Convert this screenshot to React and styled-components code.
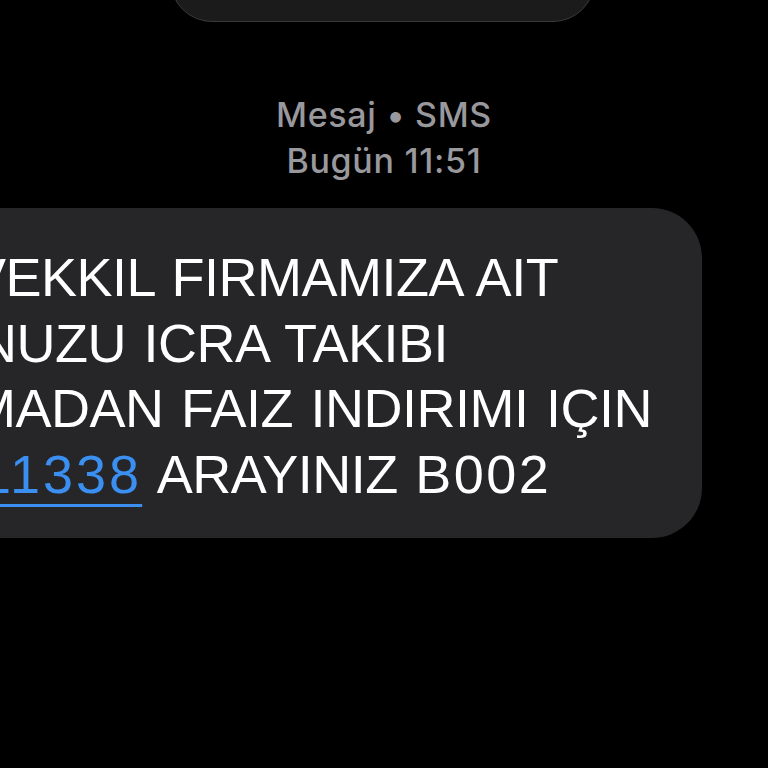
import React from "react";
import styled, { createGlobalStyle } from "styled-components";

const Global = createGlobalStyle`
  html, body {
    margin: 0;
    padding: 0;
    background: #000;
    overflow: hidden;
  }
  body {
    font-family: "Liberation Sans", Arial, sans-serif;
    -webkit-font-smoothing: antialiased;
  }
`;

const Screen = styled.div`
  width: 768px;
  height: 768px;
  display: flex;
  flex-direction: column;
  background: #000;
  overflow: hidden;
`;

const PrevCard = styled.div`
  margin-top: -78px;
  margin-left: 170px;
  width: 425px;
  height: 100px;
  box-sizing: border-box;
  background: #1b1b1c;
  border: 1.5px solid #3a3a3c;
  border-radius: 42px;
`;

const Meta = styled.div`
  margin-top: 70px;
  display: flex;
  flex-direction: column;
  align-items: center;
  font-family: "Inter", "Liberation Sans", sans-serif;
  font-weight: 500;
  font-size: 34px;
  line-height: 46px;
  letter-spacing: 0.7px;
  color: #98989d;
`;

const MetaLine = styled.div`
  white-space: nowrap;
`;

const Bubble = styled.div`
  margin-top: 24px;
  margin-left: -60px;
  width: 762px;
  box-sizing: border-box;
  padding: 37px 0 31px 60px;
  background: #262628;
  border-radius: 50px;
  color: #fff;
  font-size: 54px;
  line-height: 65.5px;
  letter-spacing: -0.5px;
  word-spacing: 3px;
  overflow: hidden;
`;

const Line = styled.div`
  white-space: nowrap;
  margin-left: ${(p) => p.$shift}px;
`;

const Phone = styled.span`
  color: #3a8ff0;
  text-decoration: underline;
  text-decoration-thickness: 3px;
  text-underline-offset: 11px;
  letter-spacing: 3px;
`;

const Code = styled.span`
  letter-spacing: 2.5px;
`;

export default function App() {
  return (
    <>
      <Global />
      <Screen>
        <PrevCard />
        <Meta>
          <MetaLine>Mesaj • SMS</MetaLine>
          <MetaLine>Bugün 11:51</MetaLine>
        </Meta>
        <Bubble>
          <Line $shift={-30}>VEKKIL FIRMAMIZA AIT</Line>
          <Line $shift={-22}>NUZU ICRA TAKIBI</Line>
          <Line $shift={-29}>MADAN FAIZ INDIRIMI IÇIN</Line>
          <Line $shift={-19}>
            <Phone>11338</Phone> ARAYINIZ <Code>B002</Code>
          </Line>
        </Bubble>
      </Screen>
    </>
  );
}
